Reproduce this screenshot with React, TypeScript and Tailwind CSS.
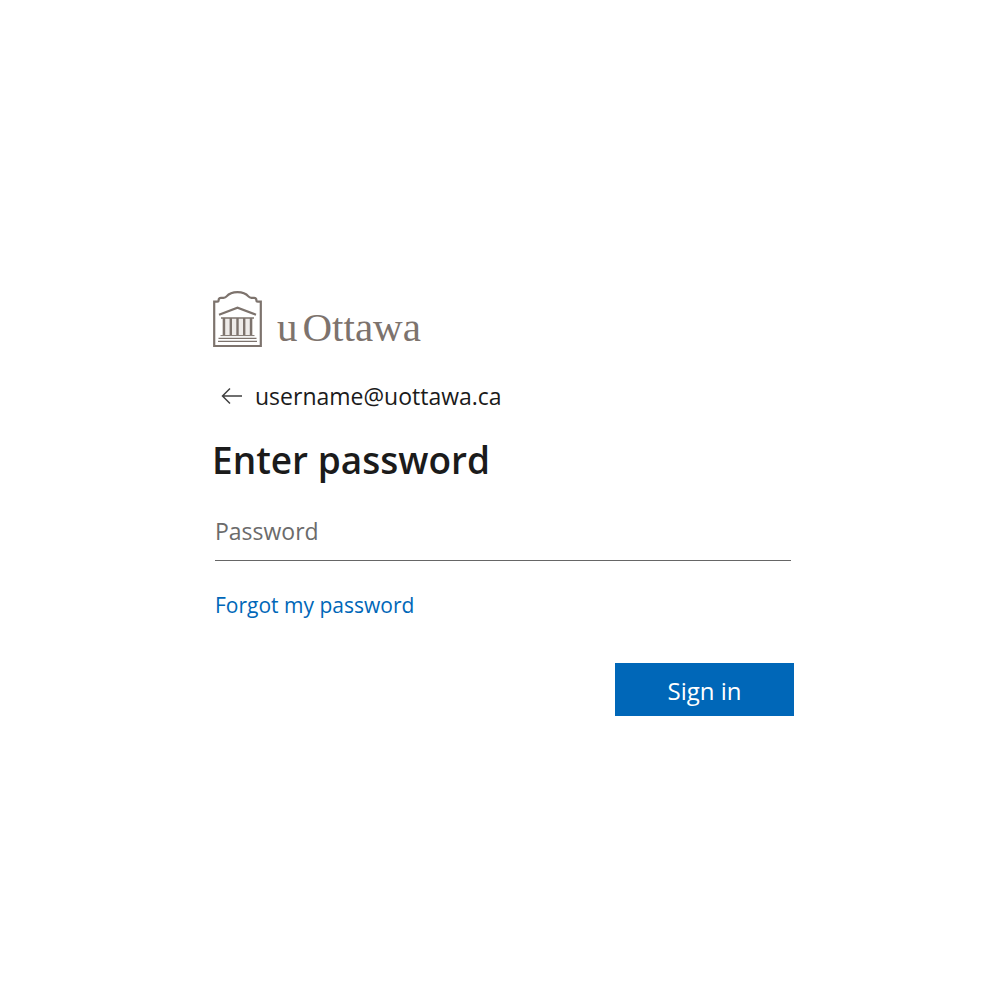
import React, { useState } from 'react';

const Logo = () => (
  <div className="flex h-[58px] items-end text-[#7d736d]">
    <svg viewBox="0 0 51 58" className="h-[58px] w-[51px]" fill="none" stroke="currentColor" aria-hidden="true">
      {/* Outer frame */}
      <path
        strokeWidth="2.2"
        d="M2.2 11.6H5.2Q6.6 11.6 6.6 10.2Q6.6 7.8 9 7.8H11.5Q13.5 7.8 14.6 6.4C17 3.6 21 2.2 25.5 2.2S34 3.6 36.4 6.4Q37.5 7.8 39.5 7.8H42Q44.4 7.8 44.4 10.2Q44.4 11.6 45.8 11.6H48.8V56H2.2Z"
      />
      {/* Wall behind the columns */}
      <path fill="#eeebe9" stroke="none" d="M10 28H41V45H10Z" />
      {/* Roof */}
      <path strokeWidth="2.2" d="M7 24.8L25.5 17.8L44 24.8" />
      <path strokeWidth="1.4" d="M9 28H42" />
      {/* Columns */}
      <path strokeWidth="2.4" d="M12 28V45M18.8 28V45M25.5 28V45M32.2 28V45M39 28V45" />
      {/* Steps */}
      <path strokeWidth="1" d="M8.5 45.6H42.5" />
      <path strokeWidth="1.4" d="M6.5 48.4H44.5M6 51.4H45" />
    </svg>
    <span className="ml-3.5 flex gap-[5px] font-['Liberation_Serif',serif] text-[41px] leading-[42px]">
      <span>u</span>
      <span>Ottawa</span>
    </span>
  </div>
);

const App = () => {
  const [password, setPassword] = useState('');

  const handleSubmit = (e: React.FormEvent<HTMLFormElement>) => {
    e.preventDefault();
  };

  return (
    <main className="flex min-h-screen items-center justify-center bg-white pt-1.5 pl-1.5 font-['Open_Sans',sans-serif] text-[#1b1b1b]">
      <div className="w-full max-w-[582px]">
        <Logo />

        <div className="mt-8 flex h-8 items-center gap-3 pl-[9px]">
          <button type="button" aria-label="Back" className="text-[#404040]">
            <svg viewBox="0 0 22 18" className="h-[18px] w-[22px]" fill="none" stroke="currentColor" strokeWidth="1.5">
              <path d="M9 1.5L1.5 9L9 16.5M1.5 9H21" />
            </svg>
          </button>
          <span className="text-[23px] leading-8">username@uottawa.ca</span>
        </div>

        <h1 className="mt-6 text-[37px] leading-12 font-semibold">Enter password</h1>

        <form onSubmit={handleSubmit}>
          <div className="mt-6 px-[3px]">
            <input
              type="password"
              aria-label="Password"
              placeholder="Password"
              value={password}
              onChange={(e) => setPassword(e.target.value)}
              className="h-[53px] w-full border-b border-[#666666] pb-1.5 text-[23px] placeholder:text-[#6b6b6b] focus:border-[#0067b8] focus:outline-none"
            />
          </div>

          <div className="mt-7 px-[3px]">
            <a href="#" className="text-[21px] leading-8 text-[#0067b8] hover:underline">
              Forgot my password
            </a>
          </div>

          <div className="mt-[42px] flex justify-end">
            <button type="submit" className="h-[53px] w-[179px] bg-[#0067b8] pt-0.5 text-[24px] text-white hover:bg-[#005da6]">
              Sign in
            </button>
          </div>
        </form>
      </div>
    </main>
  );
};

export default App;
